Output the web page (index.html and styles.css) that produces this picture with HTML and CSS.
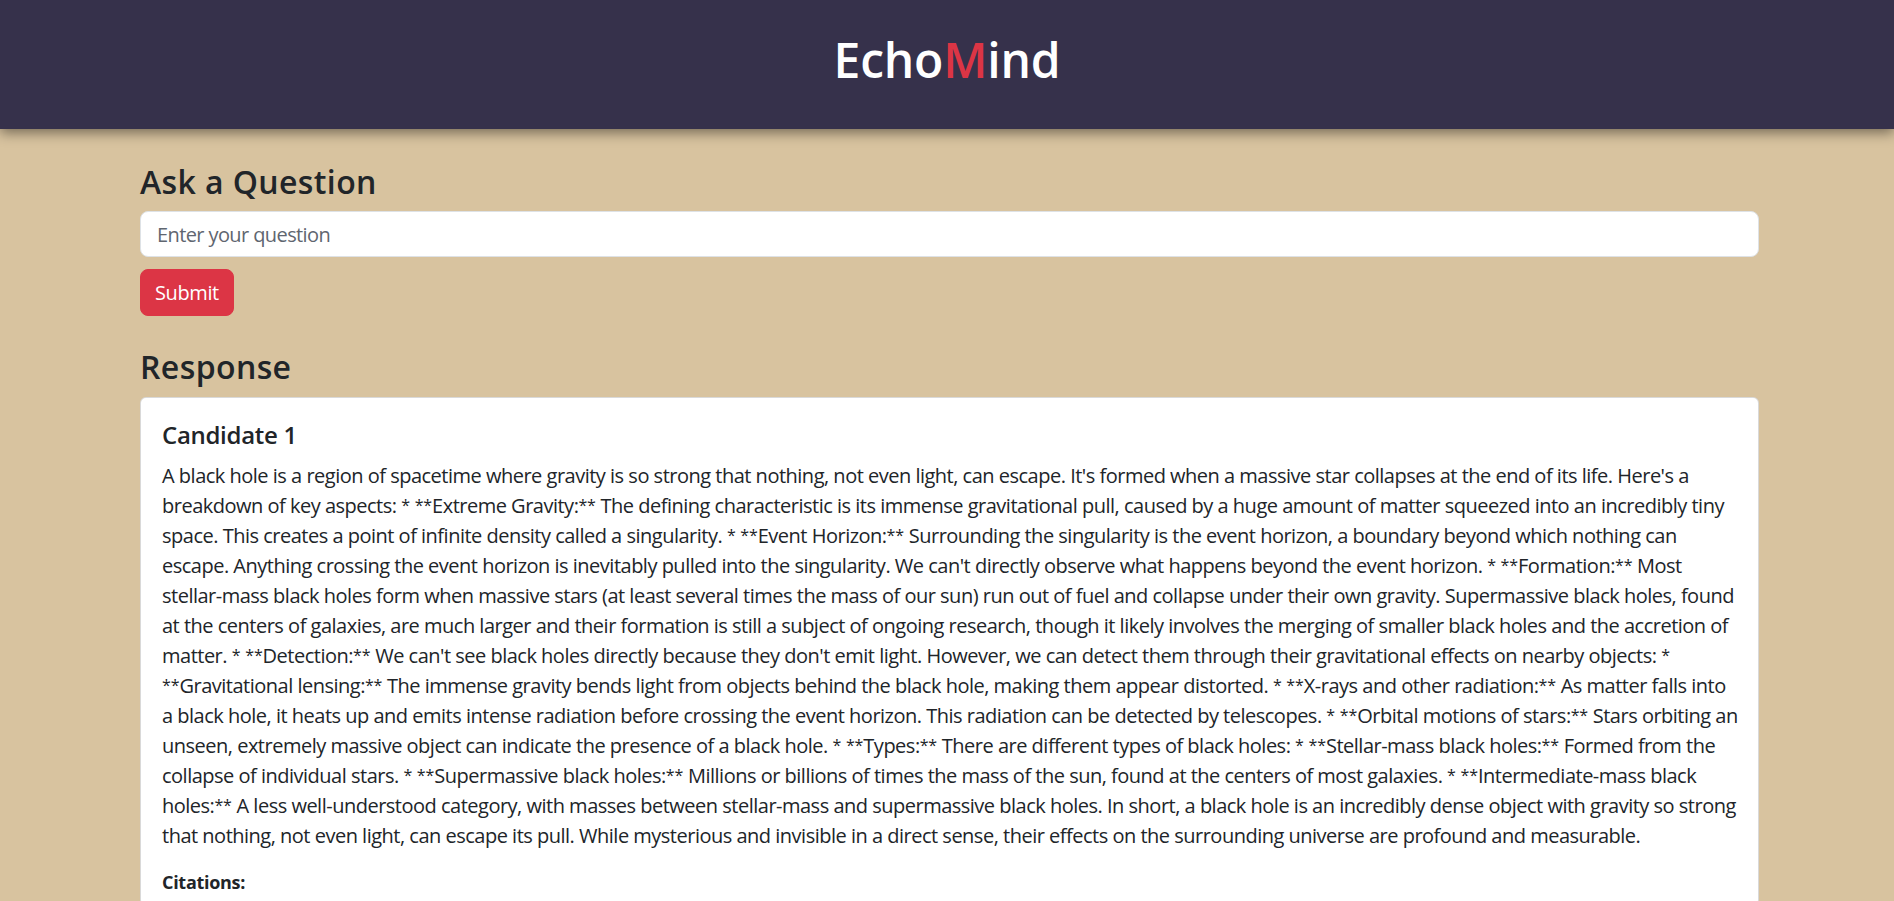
FILE: index.html
```html
<!DOCTYPE html>
<html lang="en">
<head>
<meta charset="utf-8">
<title>EchoMind</title>
<link rel="stylesheet" href="styles.css">
</head>
<body>
<header class="topbar">
  <h1 class="brand">Echo<span class="brand-accent">M</span>ind</h1>
</header>
<main class="page">
  <section class="ask">
    <h2 class="section-title">Ask a Question</h2>
    <input class="question-input" type="text" placeholder="Enter your question">
    <button class="submit-btn" type="button">Submit</button>
  </section>
  <section class="response">
    <h2 class="section-title">Response</h2>
    <div class="card">
      <h4 class="candidate-title">Candidate 1</h4>
      <p class="answer">A black hole is a region of spacetime where gravity is so strong that nothing, not even light, can escape. It's formed when a massive star collapses at the end of its life. Here's a breakdown of key aspects: <span class="md">*</span> <span class="md">**</span>Extreme Gravity:<span class="md">**</span> The defining characteristic is its immense gravitational pull, caused by a huge amount of matter squeezed into an incredibly tiny space. This creates a point of infinite density called a singularity. <span class="md">*</span> <span class="md">**</span>Event Horizon:<span class="md">**</span> Surrounding the singularity is the event horizon, a boundary beyond which nothing can escape. Anything crossing the event horizon is inevitably pulled into the singularity. We can't directly observe what happens beyond the event horizon. <span class="md">*</span> <span class="md">**</span>Formation:<span class="md">**</span> Most stellar-mass black holes form when massive stars (at least several times the mass of our sun) run out of fuel and collapse under their own gravity. Supermassive black holes, found at the centers of galaxies, are much larger and their formation is still a subject of ongoing research, though it likely involves the merging of smaller black holes and the accretion of matter. <span class="md">*</span> <span class="md">**</span>Detection:<span class="md">**</span> We can't see black holes directly because they don't emit light. However, we can detect them through their gravitational effects on nearby objects: <span class="md">*</span> <span class="md">**</span>Gravitational lensing:<span class="md">**</span> The immense gravity bends light from objects behind the black hole, making them appear distorted. <span class="md">*</span> <span class="md">**</span>X-rays and other radiation:<span class="md">**</span> As matter falls into a black hole, it heats up and emits intense radiation before crossing the event horizon. This radiation can be detected by telescopes. <span class="md">*</span> <span class="md">**</span>Orbital motions of stars:<span class="md">**</span> Stars orbiting an unseen, extremely massive object can indicate the presence of a black hole. <span class="md">*</span> <span class="md">**</span>Types:<span class="md">**</span> There are different types of black holes: <span class="md">*</span> <span class="md">**</span>Stellar-mass black holes:<span class="md">**</span> Formed from the collapse of individual stars. <span class="md">*</span> <span class="md">**</span>Supermassive black holes:<span class="md">**</span> Millions or billions of times the mass of the sun, found at the centers of most galaxies. <span class="md">*</span> <span class="md">**</span>Intermediate-mass black holes:<span class="md">**</span> A less well-understood category, with masses between stellar-mass and supermassive black holes. In short, a black hole is an incredibly dense object with gravity so strong that nothing, not even light, can escape its pull. While mysterious and invisible in a direct sense, their effects on the surrounding universe are profound and measurable.</p>
      <h6 class="citations-title">Citations:</h6>
    </div>
  </section>
</main>
</body>
</html>
```
FILE: styles.css
```css
* { box-sizing: border-box; }

html, body {
  margin: 0;
  padding: 0;
}

body {
  background: #d8c39f;
  color: #212529;
  font-family: "Segoe UI", "Open Sans", "Noto Sans", sans-serif;
  font-size: 16px;
  line-height: 1.5;
}

.topbar {
  height: 129px;
  padding-bottom: 10px;
  background: #36314b;
  display: flex;
  align-items: center;
  justify-content: center;
  box-shadow: 0 4px 12px rgba(0, 0, 0, 0.45);
  position: relative;
  z-index: 1;
}

.brand {
  margin: 0;
  color: #ffffff;
  font-size: 48px;
  font-weight: 600;
  line-height: 1.2;
  letter-spacing: -0.2px;
}

.brand-accent { color: #dc3545; }

.page {
  padding: 34px 135px 0 140px;
}

.ask {
  display: flex;
  flex-direction: column;
  align-items: flex-start;
}

.section-title {
  margin: 0 0 10px;
  font-size: 32px;
  font-weight: 600;
  line-height: 1.2;
  letter-spacing: 0.4px;
}

.question-input {
  width: 100%;
  height: 46px;
  padding: 7px 16px;
  font-family: inherit;
  font-size: 20px;
  line-height: 30px;
  color: #212529;
  background: #ffffff;
  border: 1px solid #dee2e6;
  border-radius: 8px;
  outline: none;
  letter-spacing: -0.6px;
}

.question-input::placeholder { color: #5f6670; }

.submit-btn {
  margin-top: 12px;
  height: 47px;
  padding: 0 14px;
  font-family: inherit;
  font-size: 20px;
  line-height: 30px;
  color: #ffffff;
  background: #dc3545;
  border: 1px solid #dc3545;
  border-radius: 8px;
  letter-spacing: -0.4px;
}

.response {
  margin-top: 32px;
}

.card {
  background: #ffffff;
  border: 1px solid rgba(0, 0, 0, 0.15);
  border-radius: 6px;
  padding: 23px 19px 8px 21px;
}

.candidate-title {
  margin: 0 0 11px;
  font-size: 24px;
  font-weight: 600;
  line-height: 1.2;
  letter-spacing: -0.3px;
}

.answer {
  margin: 0 0 16px;
  font-size: 20px;
  line-height: 30px;
  letter-spacing: -0.5px;
}

.md {
  font-size: 16px;
  line-height: 1;
  letter-spacing: -0.1px;
  vertical-align: 2px;
}

.citations-title {
  margin: 0;
  font-size: 18px;
  font-weight: 700;
  line-height: 30px;
  letter-spacing: -0.3px;
}
```
